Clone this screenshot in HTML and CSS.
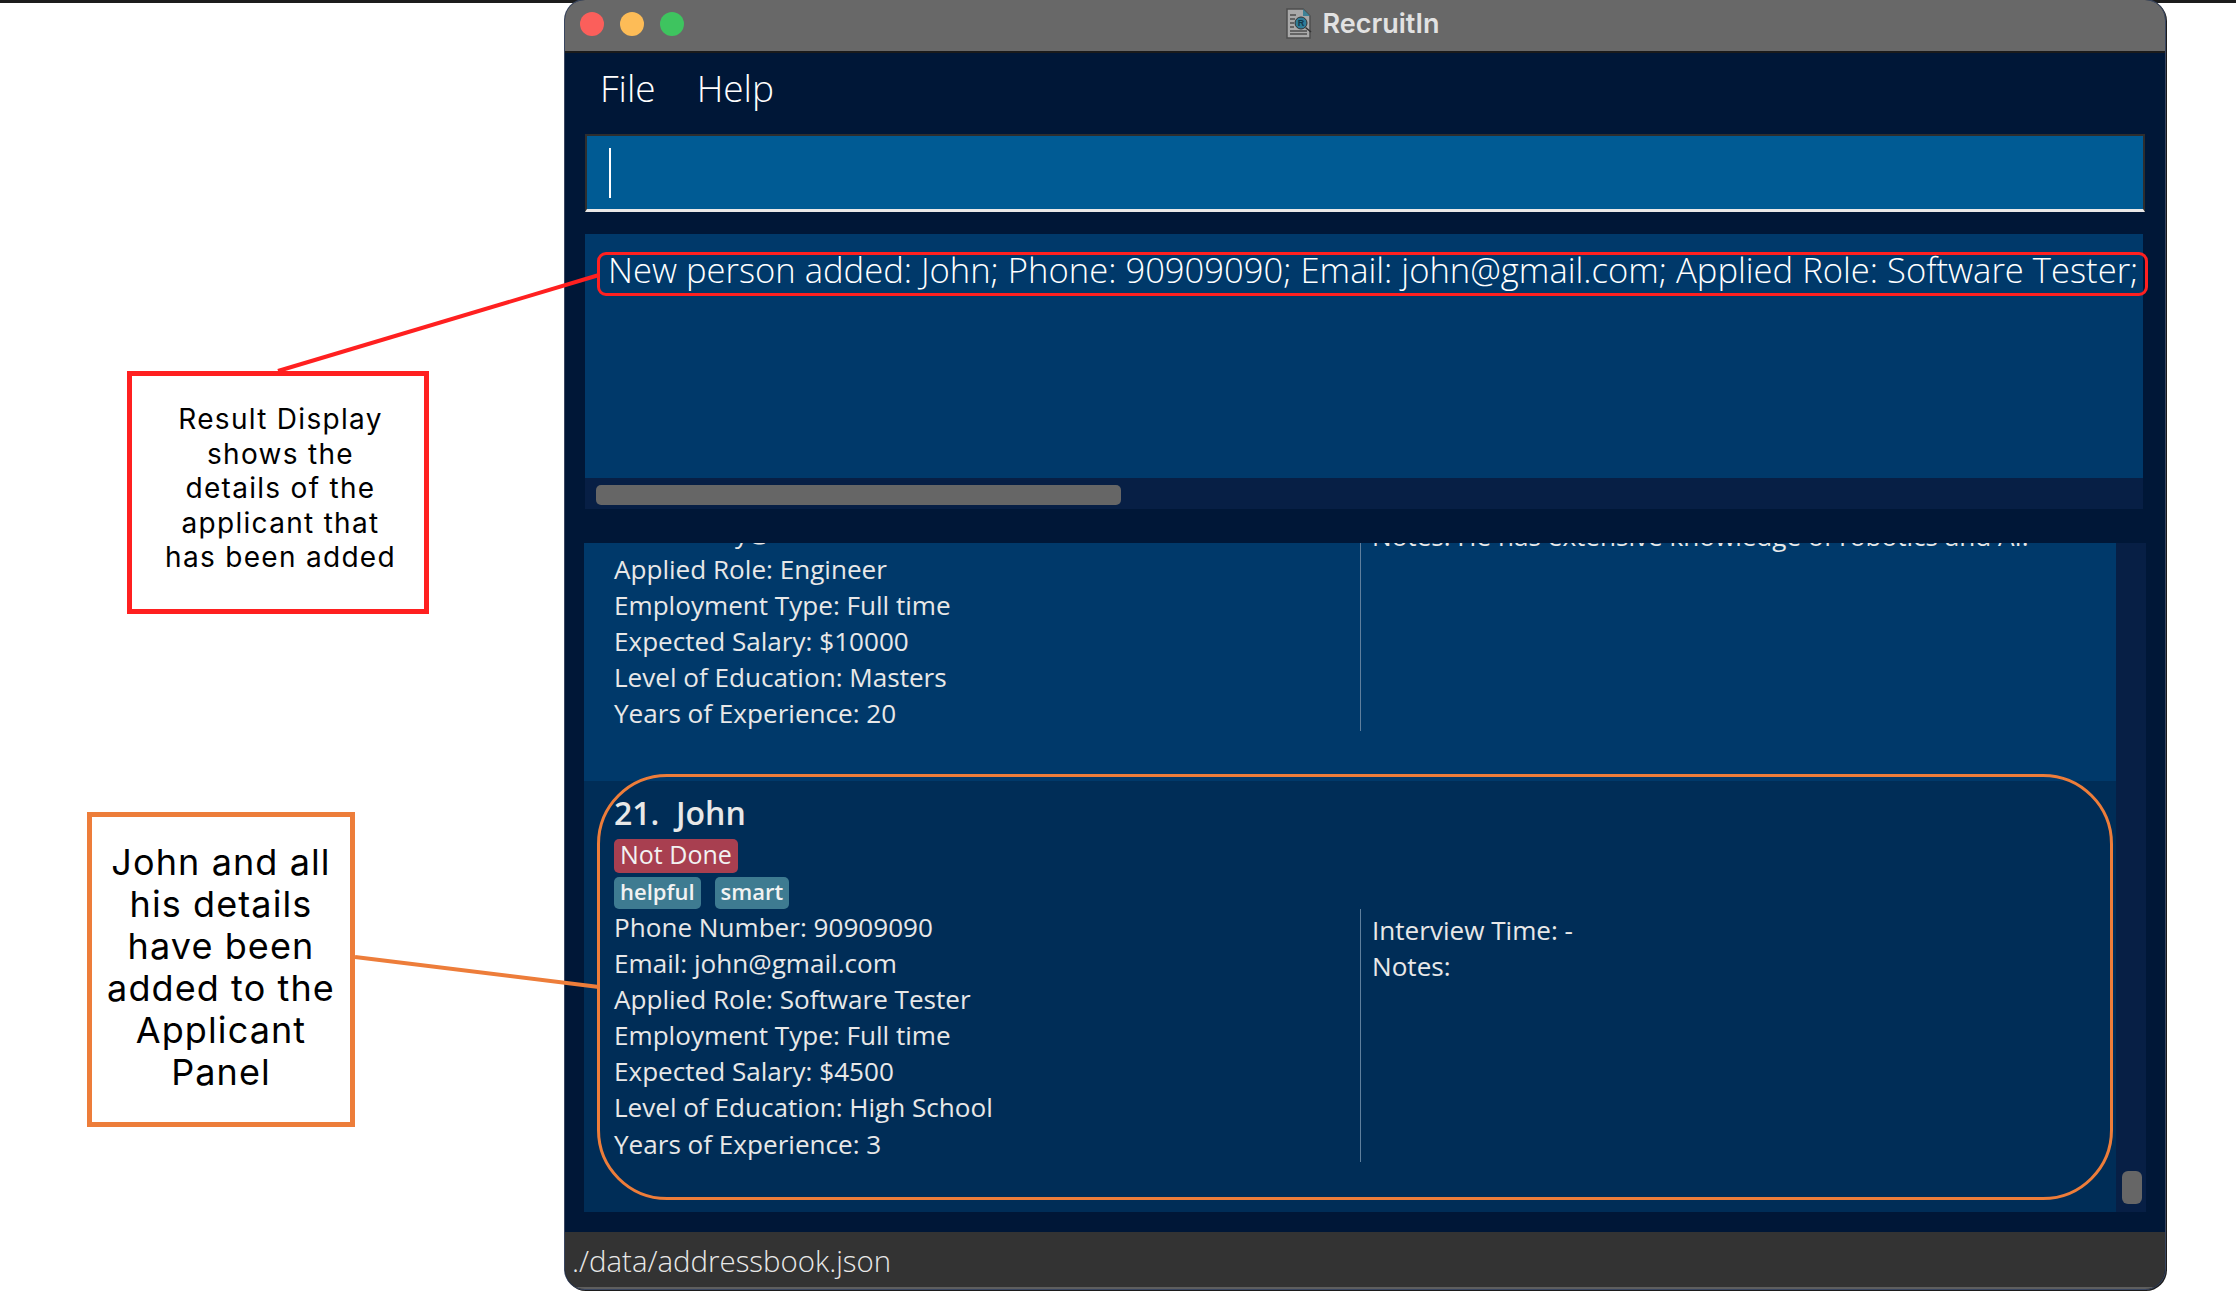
FILE: index.html
```html
<!DOCTYPE html>
<html>
<head>
    <title>RecruitIn</title>
    <link rel="stylesheet" href="styles.css">
</head>
<body>
    <div class="page">
        <div class="window">
            <div class="titlebar">
                <div class="lights">
                    <span class="light red"></span>
                    <span class="light yellow"></span>
                    <span class="light green"></span>
                </div>
                <div class="title">
                    <svg class="title-icon" width="26" height="31" viewBox="0 0 26 31">
                        <path d="M1 1H17L24 8V30H1Z" fill="#a9a9a9" stroke="#4d4d4d" stroke-width="1.5"/>
                        <path d="M17 1L24 8H17Z" fill="#3f8296"/>
                        <path d="M4 7H10M4 11H9M4 15H8M4 19H8M4 23H21M4 26H21" stroke="#4d4d4d" stroke-width="1.3"/>
                        <circle cx="15" cy="15" r="6" fill="#2f7c98" stroke="#333" stroke-width="1"/>
                        <path d="M19.5 19.5L25 24" stroke="#333" stroke-width="1.6"/>
                        <text x="15" y="18" class="icon-letter">R</text>
                    </svg>
                    <span>RecruitIn</span>
                </div>
            </div>
            <div class="content">
                <div class="menu">
                    <span>File</span>
                    <span>Help</span>
                </div>
                <div class="command-box"><span class="caret"></span></div>
                <div class="result">
                    <div class="result-text">New person added: John; Phone: 90909090; Email: john@gmail.com; Applied Role: Software Tester;</div>
                    <div class="hscroll"><div class="hthumb"></div></div>
                </div>
                <div class="list">
                    <div class="cards">
                        <div class="card card-prev">
                            <div class="card-body">
                                <div class="col-left">
                                    <div class="line">Email: tony@starkindustries.co</div>
                                    <div class="line">Applied Role: Engineer</div>
                                    <div class="line">Employment Type: Full time</div>
                                    <div class="line">Expected Salary: $10000</div>
                                    <div class="line">Level of Education: Masters</div>
                                    <div class="line">Years of Experience: 20</div>
                                </div>
                                <div class="col-right">
                                    <div class="line">Notes: He has extensive knowledge of robotics and AI.</div>
                                </div>
                            </div>
                        </div>
                        <div class="card card-john">
                            <div class="name">21.&nbsp; John</div>
                            <div class="tags"><span class="tag status">Not Done</span></div>
                            <div class="tags"><span class="tag">helpful</span><span class="tag">smart</span></div>
                            <div class="card-body">
                                <div class="col-left">
                                    <div class="line">Phone Number: 90909090</div>
                                    <div class="line">Email: john@gmail.com</div>
                                    <div class="line">Applied Role: Software Tester</div>
                                    <div class="line">Employment Type: Full time</div>
                                    <div class="line">Expected Salary: $4500</div>
                                    <div class="line">Level of Education: High School</div>
                                    <div class="line">Years of Experience: 3</div>
                                </div>
                                <div class="col-right">
                                    <div class="line">Interview Time: -</div>
                                    <div class="line">Notes:</div>
                                </div>
                            </div>
                        </div>
                    </div>
                    <div class="vscroll"><div class="vthumb"></div></div>
                </div>
            </div>
            <div class="statusbar">./data/addressbook.json</div>
        </div>

        <svg class="arrows" width="2236" height="1298">
            <line x1="278" y1="371" x2="599" y2="275" stroke="#ff2020" stroke-width="4"/>
            <line x1="355" y1="957" x2="599" y2="987" stroke="#ed7d3a" stroke-width="4"/>
        </svg>
        <div class="mark mark-result"></div>
        <div class="mark mark-john"></div>
        <div class="note note-red">Result Display<br>shows the<br>details of the<br>applicant that<br>has been added</div>
        <div class="note note-orange">John and all<br>his details<br>have been<br>added to the<br>Applicant<br>Panel</div>
    </div>
</body>
</html>
```
FILE: styles.css
```css
* {
    box-sizing: border-box;
}

body {
    margin: 0;
    background-color: #fff;
    font-family: "Open Sans", sans-serif;
}

.page {
    position: relative;
    width: 2236px;
    height: 1298px;
    overflow: hidden;
    background: linear-gradient(#1c1c1c 3px, #fff 3px);
}

.window {
    width: 1600px;
    height: 1289px;
    margin-left: 565px;
    display: flex;
    flex-direction: column;
    overflow: hidden;
    border-radius: 20px;
    background-color: #001737;
    box-shadow: 0 0 0 1px #3a4660, 1px 1px 0 1px #1c1c1c;
}

.titlebar {
    height: 53px;
    flex-shrink: 0;
    position: relative;
    display: flex;
    align-items: center;
    justify-content: center;
    padding-bottom: 4px;
    background-color: #686868;
    border-bottom: 2px solid #1b1b1b;
}

.lights {
    position: absolute;
    left: 15px;
    top: 12px;
    display: flex;
    gap: 16px;
}

.light {
    width: 24px;
    height: 24px;
    border-radius: 50%;
}

.red {
    background-color: #fb5f5b;
}

.yellow {
    background-color: #fdbc57;
}

.green {
    background-color: #3ec45f;
}

.title {
    display: flex;
    align-items: center;
    gap: 11px;
    margin-right: 5px;
    color: #e2e2e2;
    font-family: Inter, sans-serif;
    font-size: 27px;
    font-weight: 600;
}

.icon-letter {
    fill: #12384a;
    font-family: "Liberation Sans", sans-serif;
    font-size: 9px;
    text-anchor: middle;
}

.content {
    flex: 1;
    display: flex;
    flex-direction: column;
    padding: 0 20px 20px 20px;
}

.menu {
    height: 81px;
    display: flex;
    align-items: center;
    gap: 41px;
    padding: 0 0 12px 15px;
    color: #fff;
    font-size: 37px;
    font-weight: 300;
}

.command-box {
    height: 78px;
    padding: 12px 0 0 22px;
    background-color: #005b94;
    border: 2px solid #2e2e2e;
    border-bottom: 3px solid #e8e8e8;
}

.caret {
    display: block;
    width: 2px;
    height: 50px;
    background-color: #fff;
}

.result {
    height: 275px;
    margin-top: 22px;
    margin-right: 2px;
    display: flex;
    flex-direction: column;
    background-color: #00396a;
    overflow: hidden;
}

.result-text {
    flex: 1;
    padding: 14px 0 0 23px;
    color: #fff;
    font-size: 34.6px;
    font-weight: 300;
    line-height: 44px;
    white-space: nowrap;
}

.hscroll {
    height: 31px;
    flex-shrink: 0;
    padding: 7px 0 0 11px;
    background-color: #071f45;
}

.hthumb {
    width: 525px;
    height: 20px;
    border-radius: 5px;
    background-color: #666;
}

.list {
    height: 669px;
    margin: 34px -1px 0 -1px;
    display: flex;
    overflow: hidden;
}

.cards {
    flex: 1;
    display: flex;
    flex-direction: column;
    justify-content: flex-end;
    overflow: hidden;
}

.vscroll {
    width: 30px;
    flex-shrink: 0;
    display: flex;
    justify-content: center;
    align-items: flex-end;
    padding: 0 0 8px 2px;
    background-color: #071f45;
}

.vthumb {
    width: 20px;
    height: 33px;
    border-radius: 6px;
    background-color: #666;
}

.card {
    flex-shrink: 0;
    padding-left: 30px;
    color: #e8e8e8;
}

.card-prev {
    height: 266px;
    background-color: #00396a;
}

.card-john {
    height: 431px;
    background-color: #002d57;
}

.name {
    height: 58px;
    padding-top: 11px;
    font-size: 32px;
    font-weight: 600;
    line-height: 42px;
    white-space: pre;
}

.tags {
    display: flex;
    gap: 14px;
    height: 38px;
}

.tag {
    height: 32px;
    padding: 0 6px;
    border-radius: 5px;
    background-color: #3e7b91;
    color: #f2f2f2;
    font-size: 22px;
    font-weight: 600;
    line-height: 28px;
}

.status {
    height: 34px;
    background-color: #a83f50;
    font-size: 25px;
    font-weight: 500;
    line-height: 31px;
}

.card-body {
    display: flex;
}

.card-prev .card-body {
    height: 216px;
}

.card-john .card-body {
    height: 253px;
    margin-top: -6px;
}

.col-left {
    width: 747px;
    flex-shrink: 0;
    border-right: 1px solid #5f7f9d;
}

.col-right {
    padding-left: 11px;
    padding-top: 3px;
}

.line {
    height: 36.1px;
    font-size: 26.1px;
    line-height: 36px;
    white-space: nowrap;
}

.statusbar {
    height: 57px;
    flex-shrink: 0;
    padding-left: 7px;
    background-color: #333;
    border-bottom: 2px solid #5e5e5e;
    color: #e8e8e8;
    font-size: 29.4px;
    font-weight: 300;
    line-height: 58px;
}

.arrows {
    position: absolute;
    left: 0;
    top: 0;
}

.mark {
    position: absolute;
}

.mark-result {
    left: 597px;
    top: 252px;
    width: 1551px;
    height: 44px;
    border: 3px solid #ff2020;
    border-radius: 9px;
}

.mark-john {
    left: 597px;
    top: 774px;
    width: 1516px;
    height: 426px;
    border: 3px solid #ed7d3a;
    border-radius: 70px;
}

.note {
    position: absolute;
    display: flex;
    align-items: center;
    justify-content: center;
    background-color: #fff;
    color: #000;
    font-family: Inter, sans-serif;
    text-align: center;
}

.note-red {
    left: 127px;
    top: 371px;
    width: 302px;
    height: 243px;
    padding: 0 0 8px 5px;
    border: 5px solid #ff2020;
    font-size: 28px;
    letter-spacing: 1.3px;
    line-height: 34.5px;
}

.note-orange {
    left: 87px;
    top: 812px;
    width: 268px;
    height: 315px;
    padding-bottom: 6px;
    border: 5px solid #ed7d3a;
    font-size: 36px;
    letter-spacing: 1.1px;
    line-height: 42px;
}
```
